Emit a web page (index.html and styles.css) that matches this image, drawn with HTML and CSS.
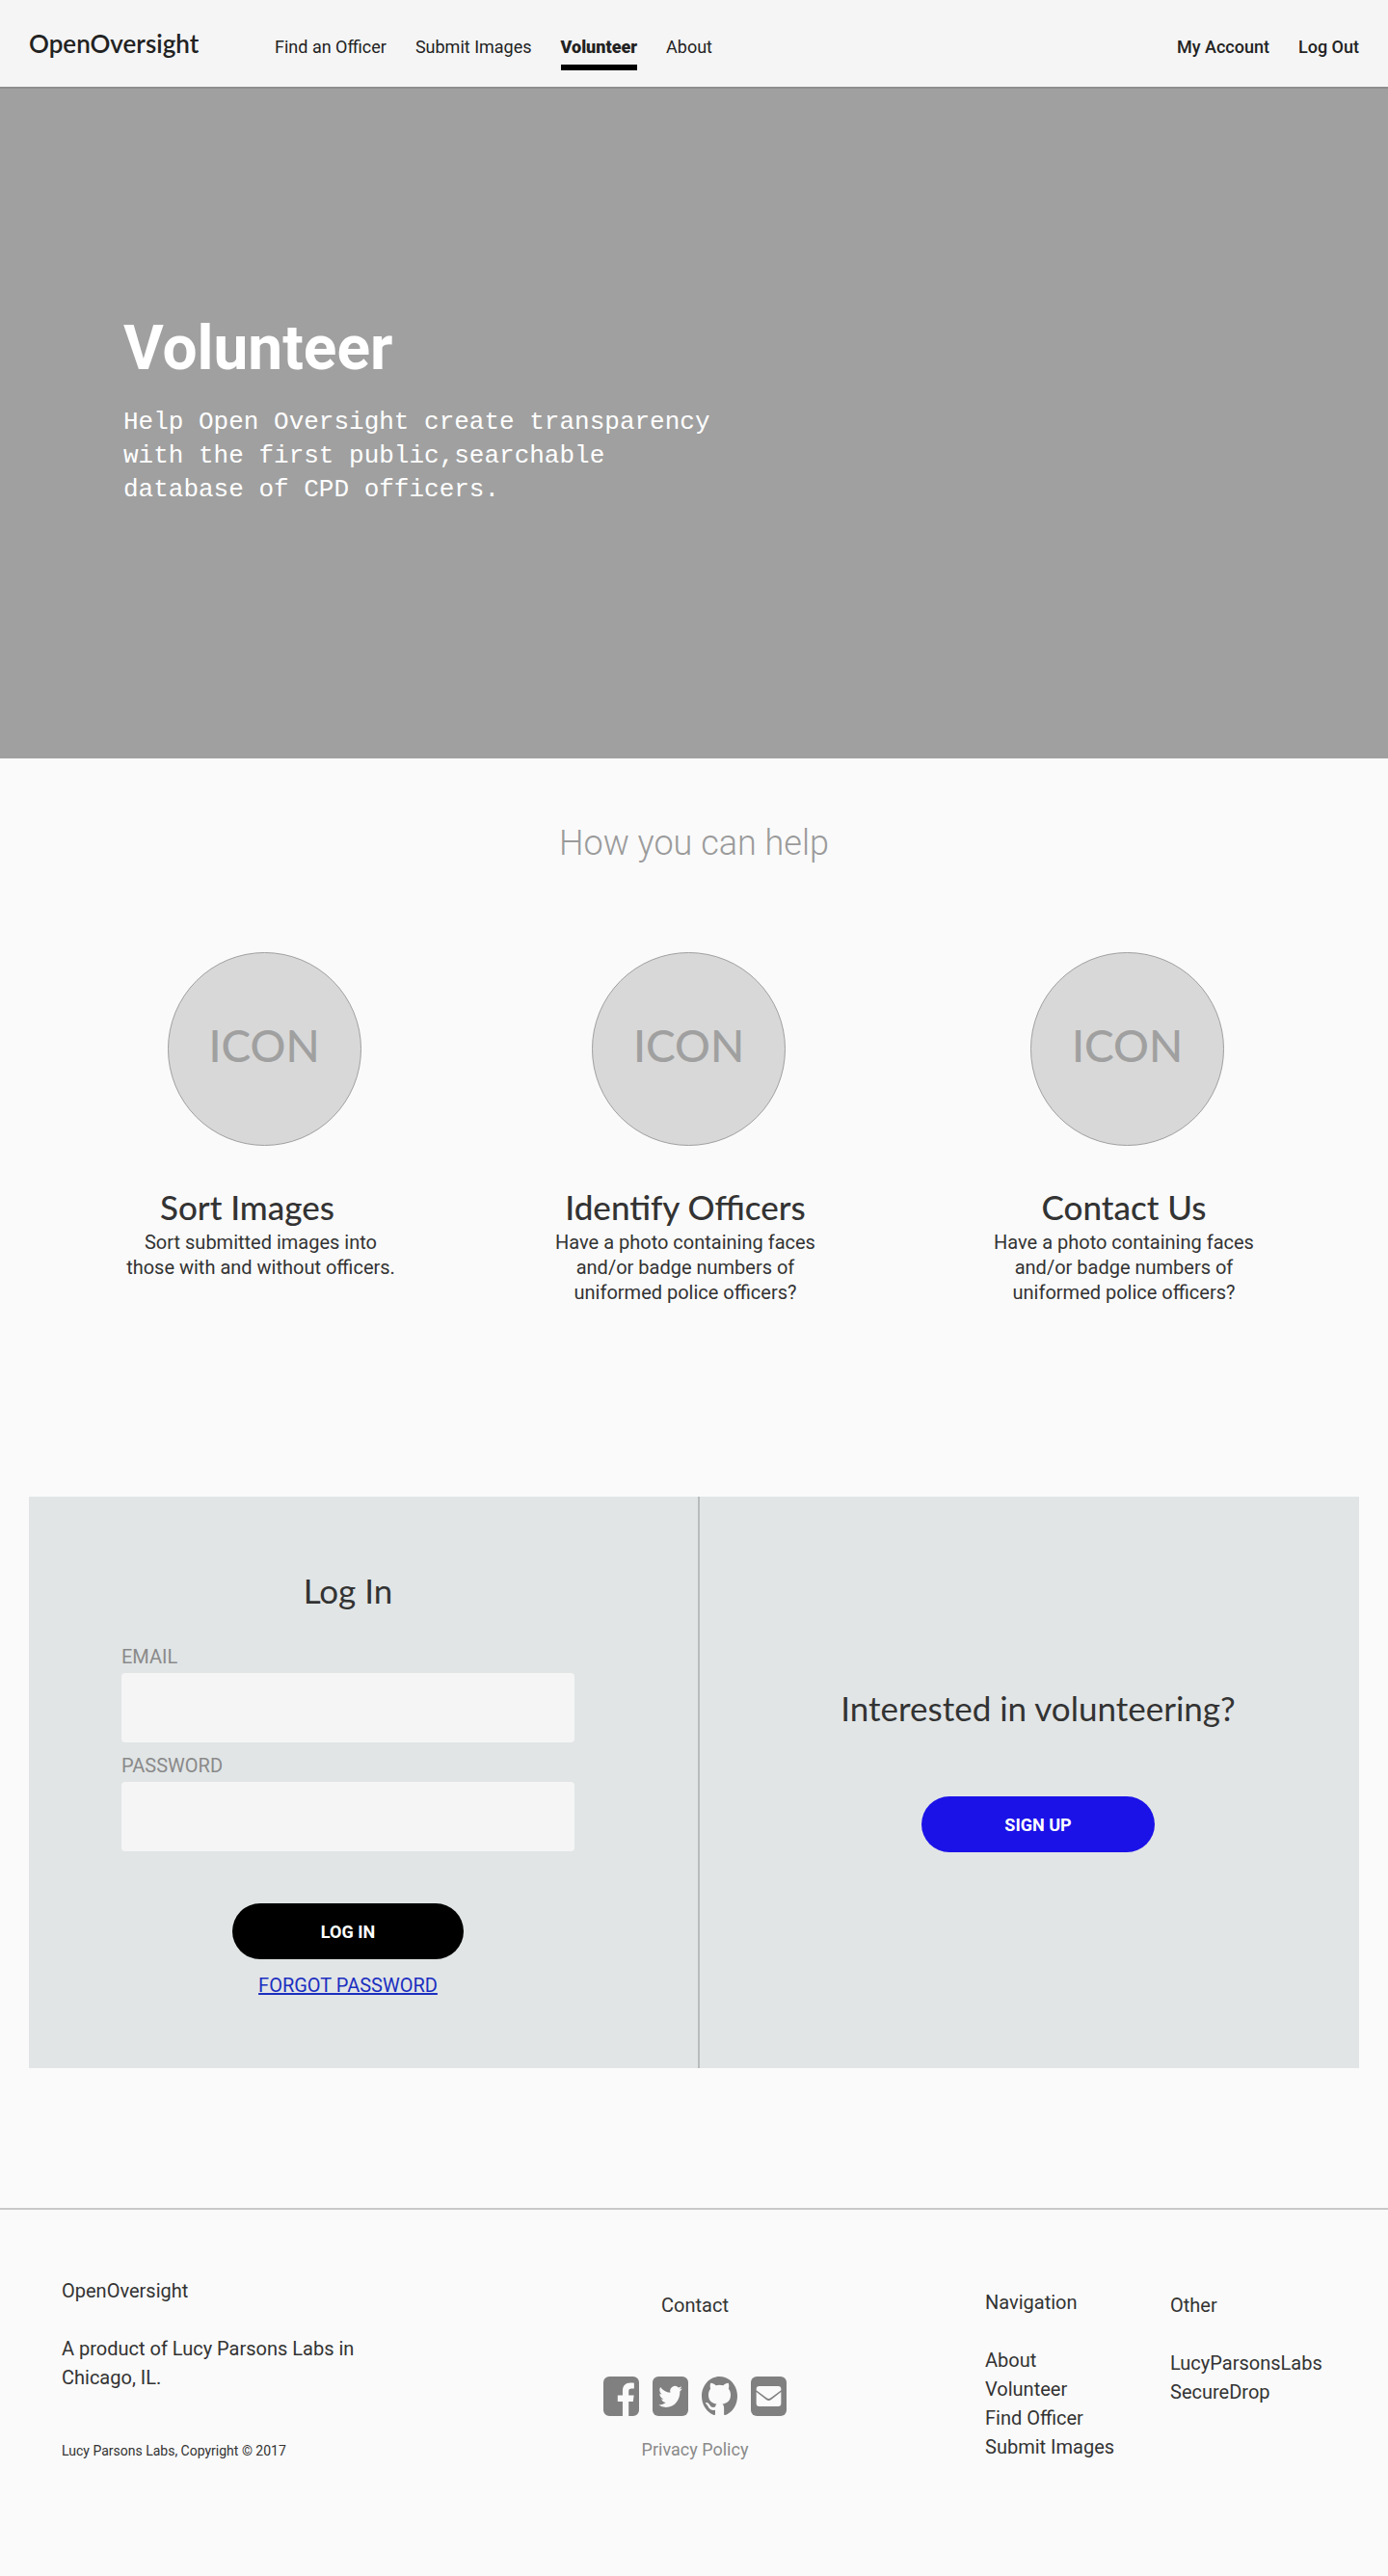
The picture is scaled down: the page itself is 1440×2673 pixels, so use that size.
FILE: index.html
```html
<!DOCTYPE html>
<html lang="en">
<head>
<meta charset="utf-8">
<meta name="viewport" content="width=device-width, initial-scale=1">
<title>Volunteer - OpenOversight</title>
<link rel="stylesheet" href="styles.css">
</head>
<body>
<header class="site-header">
  <a class="logo" href="#">OpenOversight</a>
  <nav class="main-nav" aria-label="Main">
    <a href="#">Find an Officer</a>
    <a href="#">Submit Images</a>
    <a class="active" href="#" aria-current="page">Volunteer</a>
    <a href="#">About</a>
  </nav>
  <nav class="account-nav" aria-label="Account">
    <a href="#">My Account</a>
    <a href="#">Log Out</a>
  </nav>
</header>

<main>
  <section class="hero">
    <h1>Volunteer</h1>
    <p>Help Open Oversight create transparency with the first public,searchable database of CPD officers.</p>
  </section>

  <section class="help">
    <h2>How you can help</h2>
    <div class="features">
      <article class="feature feature-sort">
        <div class="circle">ICON</div>
        <div class="feature-text">
          <h3>Sort Images</h3>
          <p>Sort submitted images into those with and without officers.</p>
        </div>
      </article>
      <article class="feature">
        <div class="circle">ICON</div>
        <div class="feature-text">
          <h3>Identify Officers</h3>
          <p>Have a photo containing faces and/or badge numbers of uniformed police officers?</p>
        </div>
      </article>
      <article class="feature">
        <div class="circle">ICON</div>
        <div class="feature-text">
          <h3>Contact Us</h3>
          <p>Have a photo containing faces and/or badge numbers of uniformed police officers?</p>
        </div>
      </article>
    </div>
  </section>

  <section class="join">
    <form class="login">
      <h2>Log In</h2>
      <label for="email">EMAIL</label>
      <input id="email" type="email">
      <label for="password">PASSWORD</label>
      <input id="password" type="password">
      <button class="button button-dark" type="submit">LOG IN</button>
      <a class="forgot" href="#">FORGOT PASSWORD</a>
    </form>
    <div class="signup">
      <h2>Interested in volunteering?</h2>
      <button class="button button-blue" type="button">SIGN UP</button>
    </div>
  </section>
</main>

<footer class="site-footer">
  <div class="about">
    <p>OpenOversight</p>
    <p class="blurb">A product of Lucy Parsons Labs in Chicago, IL.</p>
    <p class="copyright">Lucy Parsons Labs, Copyright © 2017</p>
  </div>
  <div class="contact">
    <p>Contact</p>
    <div class="social">
      <a href="#" aria-label="Facebook"><svg viewBox="0 0 36 41" preserveAspectRatio="none"><path fill-rule="evenodd" d="M6 0h24a6 6 0 0 1 6 6v29a6 6 0 0 1-6 6h-4.500V26h4.500l.8-6.500H25.500v-4c0-2 .8-3 3-3H31V6.700c-1-.2-2.200-.3-3.600-.3-5 0-8 3-8 8.300v4.800h-5V26h5v15H6a6 6 0 0 1-6-6V6a6 6 0 0 1 6-6z"/></svg></a>
      <a href="#" aria-label="Twitter"><svg viewBox="0 0 36 41" preserveAspectRatio="none"><rect width="36" height="41" rx="6"/><path class="cut" d="M30 12.500a10 10 0 0 1-2.800.9 5 5 0 0 0 2.100-3.100 9 9 0 0 1-3.100 1.300 4.900 5.500 0 0 0-8.300 5.100c-4-.2-7.600-2.400-10-5.700a5.600 5.600 0 0 0 1.500 7.400 4.600 4.600 0 0 1-2.200-.7c0 2.700 1.600 5 3.900 5.500a4.600 4.600 0 0 1-2.200.1c.6 2.200 2.400 3.800 4.600 3.800A10 10 0 0 1 6 29.500a13.500 13.500 0 0 0 7.600 2.500c9.100 0 14.300-8.500 14-16.500A11 11 0 0 0 30 12.500z"/></svg></a>
      <a href="#" aria-label="GitHub"><svg viewBox="0 0 36 41" preserveAspectRatio="none"><path d="M18 0C8 0 0 9 0 20.500 0 29.600 5.200 37.200 12.300 40c1 .2 1.300-.4 1.300-1v-4.300c-4.600 1.100-6.400-1.500-7.200-3.600-.5-1.100-1.200-2.200-2.200-2.900-.6-.4-.4-1.200.5-1.200 1.500 0 2.700 1.400 3.400 2.500 1.500 2.700 3.500 2.800 5.600 2 .2-1.500.7-2.500 1.400-3.100-5-.7-8.300-3.500-8.300-9.500 0-2.500.8-4.600 2.100-6.200-.5-1.500-.7-3.900.2-5.900 2 0 3.800 1.300 5.200 2.400a16 16 0 0 1 7.400 0c1.400-1.100 3.200-2.400 5.200-2.400.9 2 .7 4.400.2 5.900 1.300 1.600 2.100 3.700 2.100 6.200 0 6-3.300 8.800-8.300 9.500 1 .9 1.600 2.300 1.600 4.500V39c0 .6.400 1.200 1.300 1C30.800 37.200 36 29.600 36 20.500 36 9 28 0 18 0z"/></svg></a>
      <a href="#" aria-label="Email"><svg viewBox="0 0 36 41" preserveAspectRatio="none"><rect width="36" height="41" rx="6"/><path class="cut" d="M8.500 10h19a3 3 0 0 1 3 3v1.200L20 22.200q-2 1.500-4 0L5.500 14.200V13a3 3 0 0 1 3-3zM5.500 16l10 8q2.500 1.800 5 0l10-8v12a3 3 0 0 1-3 3h-19a3 3 0 0 1-3-3z"/></svg></a>
    </div>
    <a class="privacy" href="#">Privacy Policy</a>
  </div>
  <nav class="links" aria-label="Navigation">
    <p>Navigation</p>
    <a href="#">About</a>
    <a href="#">Volunteer</a>
    <a href="#">Find Officer</a>
    <a href="#">Submit Images</a>
  </nav>
  <nav class="links links-other" aria-label="Other">
    <p>Other</p>
    <a href="#">LucyParsonsLabs</a>
    <a href="#">SecureDrop</a>
  </nav>
</footer>
</body>
</html>
```
FILE: styles.css
```css
* {
  box-sizing: border-box;
}

body {
  margin: 0;
  background: #fafafa;
  color: #333;
  font-family: Roboto, sans-serif;
  font-size: 20px;
  line-height: 30px;
}

h1, h2, h3, p {
  margin: 0;
}

a {
  color: inherit;
  text-decoration: none;
}

/* Header */

.site-header {
  display: flex;
  align-items: flex-start;
  padding: 30px 30px 17px;
  background: #f5f5f5;
  border-bottom: 2px solid #8f8f8f;
  color: #222;
}

.logo {
  width: 255px;
  font-family: Lato, sans-serif;
  font-size: 26px;
  font-weight: 600;
  line-height: 30px;
}

.main-nav, .account-nav {
  display: flex;
  gap: 30px;
  padding-top: 5px;
  font-size: 18px;
  line-height: 28px;
}

.account-nav {
  margin-left: auto;
  font-weight: 500;
}

.main-nav a {
  padding-bottom: 4px;
  border-bottom: 6px solid transparent;
}

.main-nav .active {
  border-color: #000;
  font-weight: 900;
}

/* Hero */

.hero {
  padding: 232px 128px 261px;
  background: #a0a0a0;
  color: #fff;
}

.hero h1 {
  font-size: 64px;
  font-weight: 700;
  line-height: 76px;
}

.hero p {
  max-width: 620px;
  margin-top: 21px;
  font-family: "Liberation Mono", monospace;
  font-size: 26px;
  line-height: 35px;
}

/* How you can help */

.help {
  padding: 67px 36px 199px 54px;
}

.help > h2 {
  padding-right: 18px;
  color: #9b9b9b;
  font-size: 36px;
  font-weight: 300;
  line-height: 42px;
  text-align: center;
}

.features {
  display: grid;
  grid-template-columns: 440fr 441fr 469fr;
  margin-top: 92px;
}

.circle {
  display: flex;
  align-items: center;
  justify-content: center;
  width: 201px;
  height: 201px;
  margin: 0 auto;
  padding-bottom: 8px;
  border: 1px solid #a0a0a0;
  border-radius: 50%;
  background: #d8d8d8;
  color: #a0a0a0;
  font-family: Lato, sans-serif;
  font-size: 46px;
  font-weight: 500;
}

.feature-text {
  margin-top: 39px;
  padding-right: 7px;
  text-align: center;
}

.feature h3, .join h2 {
  font-family: Lato, sans-serif;
  font-size: 35px;
  font-weight: 500;
  line-height: 48px;
}

.feature-sort h3 {
  padding-right: 28px;
}

.feature p {
  max-width: 290px;
  margin: 0 auto;
  line-height: 26px;
}

/* Log in and sign up */

.join {
  display: grid;
  grid-template-columns: 696fr 684fr;
  margin: 0 30px;
  background: #e1e5e6;
}

.login {
  display: flex;
  flex-direction: column;
  padding: 73px 128px 71px 96px;
  border-right: 2px solid #b9bcbd;
}

.login h2 {
  margin-bottom: 33px;
  text-align: center;
}

.join h2 {
  font-weight: 400;
}

.login label {
  margin-bottom: 5px;
  color: #8a8a8a;
  line-height: 24px;
}

.login input {
  height: 72px;
  margin-bottom: 12px;
  padding: 0 16px;
  border: 0;
  border-radius: 4px;
  background: #f5f5f5;
  color: #333;
  font: inherit;
}

.button {
  height: 58px;
  border: 0;
  border-radius: 30px;
  color: #fff;
  font-family: inherit;
  font-size: 18px;
  font-weight: 700;
}

.button-dark {
  align-self: center;
  width: 240px;
  margin-top: 42px;
  background: #000;
}

.button-blue {
  width: 242px;
  background: #1b12e8;
}

.forgot {
  align-self: center;
  margin-top: 12px;
  color: #1b2fc0;
  text-decoration: underline;
}

.signup {
  display: flex;
  flex-direction: column;
  align-items: center;
  justify-content: center;
  gap: 68px;
  padding: 0 0 29px 18px;
}

/* Footer */

.site-footer {
  display: grid;
  grid-template-columns: 562fr 396fr 192fr 226fr;
  margin-top: 145px;
  padding: 69px 0 112px 64px;
  border-top: 2px solid #c8c8c8;
}

.blurb {
  max-width: 320px;
  margin-top: 30px;
}

.copyright {
  margin-top: 46px;
  font-size: 14px;
}

.contact {
  display: flex;
  flex-direction: column;
  align-items: flex-start;
  padding-top: 15px;
}

.contact p, .privacy {
  width: 190px;
  text-align: center;
}

.social {
  display: flex;
  gap: 14px;
  margin-top: 59px;
}

.social svg {
  display: block;
  width: 37px;
  height: 41px;
  fill: #808080;
}

.social .cut {
  fill: #fafafa;
}

.privacy {
  margin-top: 20px;
  color: #8a8a8a;
  font-size: 18px;
}

.links {
  display: flex;
  flex-direction: column;
  align-items: flex-start;
  padding-top: 12px;
}

.links p {
  margin-bottom: 30px;
}

.links-other {
  padding-top: 15px;
}
```
